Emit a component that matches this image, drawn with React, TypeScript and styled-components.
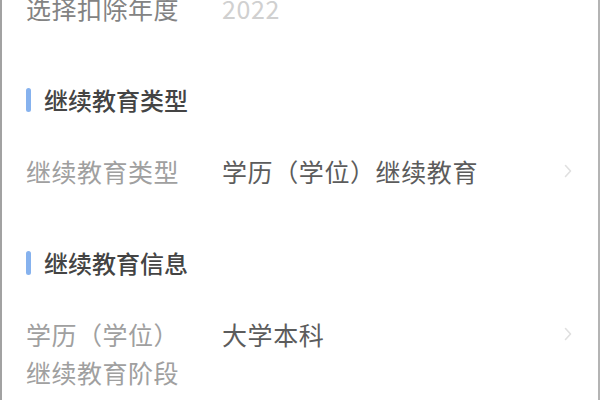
import React from 'react';
import styled, { createGlobalStyle } from 'styled-components';

const GlobalStyle = createGlobalStyle`
  html, body {
    margin: 0;
    padding: 0;
    background: #ffffff;
  }
  body {
    font-family: "Noto Sans CJK SC", "Noto Sans", sans-serif;
  }
`;

type Item = {
  label: string[];
  value: string;
  placeholder?: boolean;
  arrow?: boolean;
};

const sections: { title?: string; items: Item[] }[] = [
  {
    items: [{ label: ['选择扣除年度'], value: '2022', placeholder: true }],
  },
  {
    title: '继续教育类型',
    items: [{ label: ['继续教育类型'], value: '学历（学位）继续教育', arrow: true }],
  },
  {
    title: '继续教育信息',
    items: [{ label: ['学历（学位）', '继续教育阶段'], value: '大学本科', arrow: true }],
  },
];

const Chevron = () => (
  <svg width="8" height="14" viewBox="0 0 8 14" fill="none">
    <path d="M1.5 1.5 L6.5 7 L1.5 12.5" stroke="#e0e0e0" strokeWidth="1.6" strokeLinecap="round" strokeLinejoin="round" />
  </svg>
);

const App = () => {
  return (
    <>
      <GlobalStyle />
      <Screen>
        <Content>
          {sections.map((section, i) => (
            <Section key={i}>
              {section.title && (
                <SectionHeader>
                  <HeaderBar />
                  <HeaderTitle>{section.title}</HeaderTitle>
                </SectionHeader>
              )}
              {section.items.map((item) => (
                <Row key={item.label.join('')}>
                  <Label $dark={item.placeholder}>
                    {item.label.map((line) => (
                      <span key={line}>{line}</span>
                    ))}
                  </Label>
                  <Value $placeholder={item.placeholder}>{item.value}</Value>
                  {item.arrow && (
                    <Arrow>
                      <Chevron />
                    </Arrow>
                  )}
                </Row>
              ))}
            </Section>
          ))}
        </Content>
      </Screen>
    </>
  );
};

export default App;

const Screen = styled.main`
  box-sizing: border-box;
  width: 600px;
  height: 400px;
  overflow: hidden;
  background: #ffffff;
  border-left: 2px solid #a2a2a2;
  border-right: 2px solid #b4b4b4;
`;

const Content = styled.div`
  display: flex;
  flex-direction: column;
  gap: 28px;
  margin-top: -28px;
  padding: 0 26px 0 24px;
`;

const Section = styled.section`
  display: flex;
  flex-direction: column;
`;

const SectionHeader = styled.div`
  display: flex;
  align-items: center;
  gap: 13px;
  height: 56px;
  margin-bottom: 7px;
`;

const HeaderBar = styled.span`
  width: 5px;
  height: 24px;
  border-radius: 2.5px;
  background: #86b2ee;
`;

const HeaderTitle = styled.h3`
  margin: 0;
  font-size: 24px;
  font-weight: 500;
  color: #444444;
  line-height: 1;
`;

const Row = styled.div`
  display: flex;
  align-items: flex-start;
  padding: 17px 0;
  font-size: 25px;
  line-height: 38px;
`;

const Label = styled.div<{ $dark?: boolean }>`
  display: flex;
  flex-direction: column;
  flex: 0 0 196px;
  color: ${({ $dark }) => ($dark ? '#838383' : '#a0a0a0')};
  letter-spacing: 0.5px;
`;

const Value = styled.div<{ $placeholder?: boolean }>`
  flex: 1;
  color: ${({ $placeholder }) => ($placeholder ? '#d0d0d0' : '#5c5c5c')};
  letter-spacing: 0.6px;
`;

const Arrow = styled.div`
  display: flex;
  align-items: center;
  height: 38px;
`;
